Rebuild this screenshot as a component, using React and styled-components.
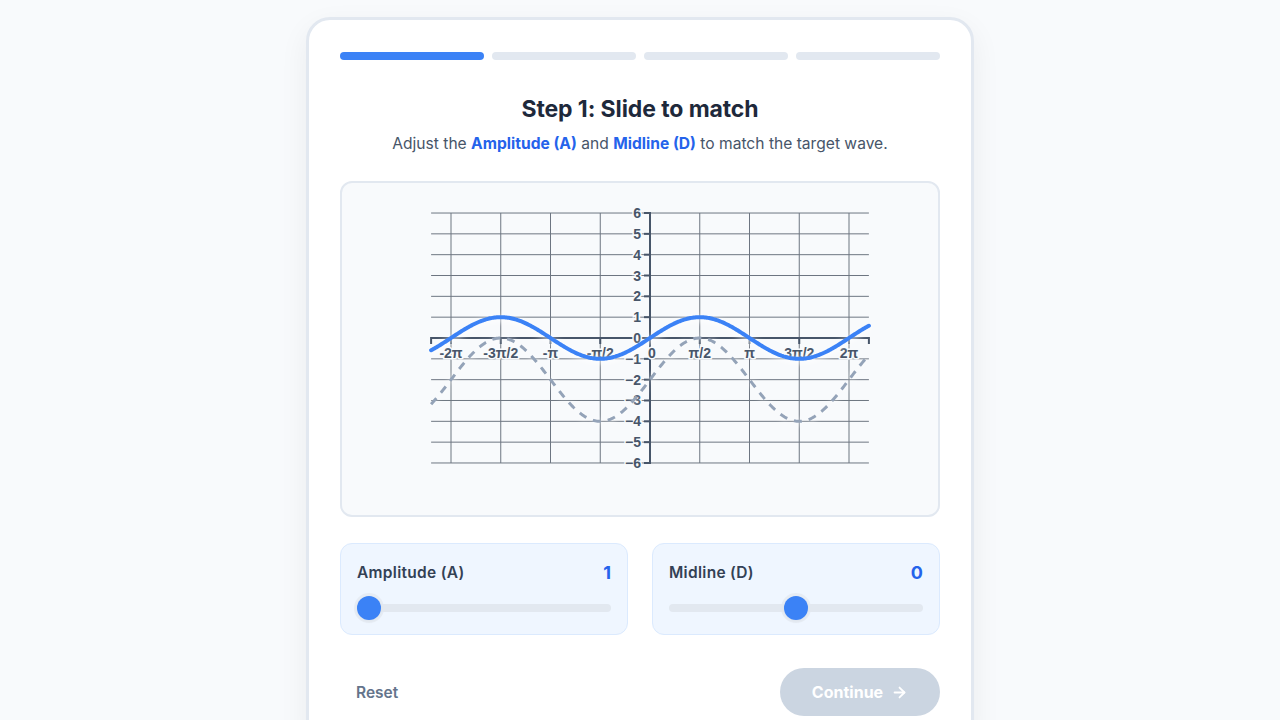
import React, { useState } from "react";
import styled, { createGlobalStyle } from "styled-components";
import { ArrowRight } from "lucide-react";

const GlobalStyle = createGlobalStyle`
  * { box-sizing: border-box; }
  body {
    margin: 0;
    background: #f8fafc;
    font-family: Inter, "Liberation Sans", sans-serif;
    color: #1e293b;
  }
`;

// chart geometry (svg local coords)
const W = 560;
const H = 300;
const OX = 290;
const OY = 139;
const PX = 99.5 / Math.PI; // px per radian
const PY = 20.83; // px per unit
const XMIN = -2.2 * Math.PI;
const XMAX = 2.2 * Math.PI;

const sx = (x) => OX + x * PX;
const sy = (y) => OY - y * PY;

const curve = (fn) => {
  const pts = [];
  for (let i = 0; i <= 400; i++) {
    const x = XMIN + ((XMAX - XMIN) * i) / 400;
    pts.push(`${sx(x).toFixed(2)},${sy(fn(x)).toFixed(2)}`);
  }
  return "M" + pts.join("L");
};

const xTicks = [
  [-2, "-2π"],
  [-1.5, "-3π/2"],
  [-1, "-π"],
  [-0.5, "-π/2"],
  [0, "0"],
  [0.5, "π/2"],
  [1, "π"],
  [1.5, "3π/2"],
  [2, "2π"],
];
const yTicks = [6, 5, 4, 3, 2, 1, 0, -1, -2, -3, -4, -5, -6];

const WaveChart = ({ amp, mid }) => {
  const left = sx(XMIN);
  const right = sx(XMAX);
  const top = sy(6);
  const bottom = sy(-6);
  return (
    <svg width={W} height={H} viewBox={`0 0 ${W} ${H}`}>
      <g stroke="#4b5563" strokeWidth="1" opacity="0.8">
        {yTicks.map((v) => (
          <line key={"h" + v} x1={left} x2={right} y1={sy(v)} y2={sy(v)} />
        ))}
        {xTicks.map(([k]) => (
          <line key={"v" + k} x1={sx(k * Math.PI)} x2={sx(k * Math.PI)} y1={top} y2={bottom} />
        ))}
      </g>
      <g stroke="#475569" strokeWidth="2" fill="none">
        <path d={`M${left},${OY + 6}V${OY}H${right}V${OY + 6}`} />
        {xTicks.map(([k]) => (
          <line key={"xt" + k} x1={sx(k * Math.PI)} x2={sx(k * Math.PI)} y1={OY} y2={OY + 6} />
        ))}
        <path d={`M${OX - 6},${top}H${OX}V${bottom}H${OX - 6}`} />
        {yTicks.map((v) => (
          <line key={"yt" + v} x1={OX - 6} x2={OX} y1={sy(v)} y2={sy(v)} />
        ))}
      </g>
      <g
        fill="#475569"
        fontFamily="'Liberation Sans', Arial, sans-serif"
        fontSize="14"
        fontWeight="700"
        stroke="#f8fafc"
        strokeWidth="3"
        paintOrder="stroke"
      >
        {xTicks.map(([k, label]) => (
          <text key={"xl" + k} x={sx(k * Math.PI) + (k === 0 ? 2 : 0)} y={OY + 20} textAnchor="middle">
            {label}
          </text>
        ))}
        {yTicks.map((v) => (
          <text key={"yl" + v} x={OX - 9} y={sy(v) + 5} textAnchor="end">
            {v < 0 ? "\u2212" + Math.abs(v) : v}
          </text>
        ))}
      </g>
      <path
        d={curve((x) => 2 * Math.sin(x) - 2)}
        fill="none"
        stroke="#94a3b8"
        strokeWidth="3"
        strokeDasharray="8 7"
        style={{ filter: "drop-shadow(0 1px 3px rgba(255,255,255,0.95))" }}
      />
      <path
        d={curve((x) => amp * Math.sin(x) + mid)}
        fill="none"
        stroke="#3b82f6"
        strokeWidth="4"
        strokeLinecap="round"
        style={{ filter: "drop-shadow(0 2px 3px rgba(255,255,255,0.95))" }}
      />
    </svg>
  );
};

const App = () => {
  const [amp, setAmp] = useState(1);
  const [mid, setMid] = useState(0);

  return (
    <Page>
      <GlobalStyle />
      <Card>
        <Progress>
          <Segment $active />
          <Segment />
          <Segment />
          <Segment />
        </Progress>
        <Title>Step 1: Slide to match</Title>
        <Subtitle>
          Adjust the <Hl>Amplitude (A)</Hl> and <Hl>Midline (D)</Hl> to match the target wave.
        </Subtitle>
        <ChartPanel>
          <WaveChart amp={amp} mid={mid} />
        </ChartPanel>
        <Controls>
          <SliderCard>
            <SliderHead>
              <SliderLabel>Amplitude (A)</SliderLabel>
              <SliderValue>{amp}</SliderValue>
            </SliderHead>
            <Range
              type="range"
              min={1}
              max={5}
              step={1}
              value={amp}
              onChange={(e) => setAmp(Number(e.target.value))}
            />
          </SliderCard>
          <SliderCard>
            <SliderHead>
              <SliderLabel>Midline (D)</SliderLabel>
              <SliderValue>{mid}</SliderValue>
            </SliderHead>
            <Range
              type="range"
              min={-5}
              max={5}
              step={1}
              value={mid}
              onChange={(e) => setMid(Number(e.target.value))}
            />
          </SliderCard>
        </Controls>
        <Footer>
          <ResetButton
            onClick={() => {
              setAmp(1);
              setMid(0);
            }}
          >
            Reset
          </ResetButton>
          <ContinueButton disabled>
            Continue
            <ArrowRight size={17} strokeWidth={2.5} />
          </ContinueButton>
        </Footer>
      </Card>
    </Page>
  );
};

const Page = styled.div`
  min-height: 100vh;
  display: flex;
  justify-content: center;
  padding-top: 17px;
`;

const Card = styled.div`
  width: 668px;
  background: #ffffff;
  border: 3px solid #e2e8f0;
  border-radius: 24px;
  padding: 32px 31px;
  box-shadow: 0 10px 30px rgba(15, 23, 42, 0.06);
  align-self: flex-start;
`;

const Progress = styled.div`
  display: flex;
  gap: 8px;
`;

const Segment = styled.div`
  flex: 1;
  height: 8px;
  border-radius: 4px;
  background: ${(p) => (p.$active ? "#3b82f6" : "#e2e8f0")};
`;

const Title = styled.h2`
  margin: 33px 0 0;
  text-align: center;
  font-size: 23px;
  line-height: 33px;
  font-weight: 700;
  letter-spacing: -0.1px;
  color: #1e293b;
`;

const Subtitle = styled.p`
  margin: 6px 0 0;
  text-align: center;
  font-size: 15.6px;
  line-height: 24px;
  color: #475569;
`;

const Hl = styled.span`
  color: #2563eb;
  font-weight: 700;
`;

const ChartPanel = styled.div`
  margin-top: 25px;
  height: 336px;
  border: 2px solid #e2e8f0;
  border-radius: 12px;
  background: #f8fafc;
  display: flex;
  align-items: center;
  justify-content: center;

  svg {
    display: block;
  }
`;

const Controls = styled.div`
  margin-top: 26px;
  display: grid;
  grid-template-columns: 1fr 1fr;
  gap: 24px;
`;

const SliderCard = styled.div`
  background: #eff6ff;
  border: 1px solid #dbeafe;
  border-radius: 12px;
  padding: 16px 16px 14px;
  display: flex;
  flex-direction: column;
  gap: 12px;
`;

const SliderHead = styled.div`
  display: flex;
  justify-content: space-between;
  align-items: center;
  height: 24px;
`;

const SliderLabel = styled.span`
  font-size: 15.5px;
  font-weight: 600;
  letter-spacing: 0.3px;
  color: #334155;
`;

const SliderValue = styled.span`
  font-size: 18px;
  font-weight: 700;
  color: #2563eb;
`;

const Range = styled.input`
  -webkit-appearance: none;
  appearance: none;
  width: 100%;
  height: 24px;
  margin: 0;
  background: transparent;
  cursor: pointer;

  &::-webkit-slider-runnable-track {
    height: 8px;
    border-radius: 4px;
    background: #e2e8f0;
  }

  &::-webkit-slider-thumb {
    -webkit-appearance: none;
    width: 24px;
    height: 24px;
    margin-top: -8px;
    border-radius: 50%;
    background: #3b82f6;
    box-shadow: 0 0 0 3px rgba(226, 232, 240, 0.7), 0 1px 3px rgba(15, 23, 42, 0.15);
  }
`;

const Footer = styled.div`
  margin-top: 33px;
  display: flex;
  justify-content: space-between;
  align-items: center;
`;

const ResetButton = styled.button`
  border: none;
  background: transparent;
  padding: 8px 16px;
  font-family: inherit;
  font-size: 15.5px;
  font-weight: 600;
  color: #64748b;
  cursor: pointer;
`;

const ContinueButton = styled.button`
  width: 160px;
  height: 48px;
  border: none;
  border-radius: 24px;
  background: #cbd5e1;
  color: #ffffff;
  font-family: inherit;
  font-size: 16px;
  font-weight: 700;
  display: flex;
  align-items: center;
  justify-content: center;
  gap: 8px;
`;

export default App;
